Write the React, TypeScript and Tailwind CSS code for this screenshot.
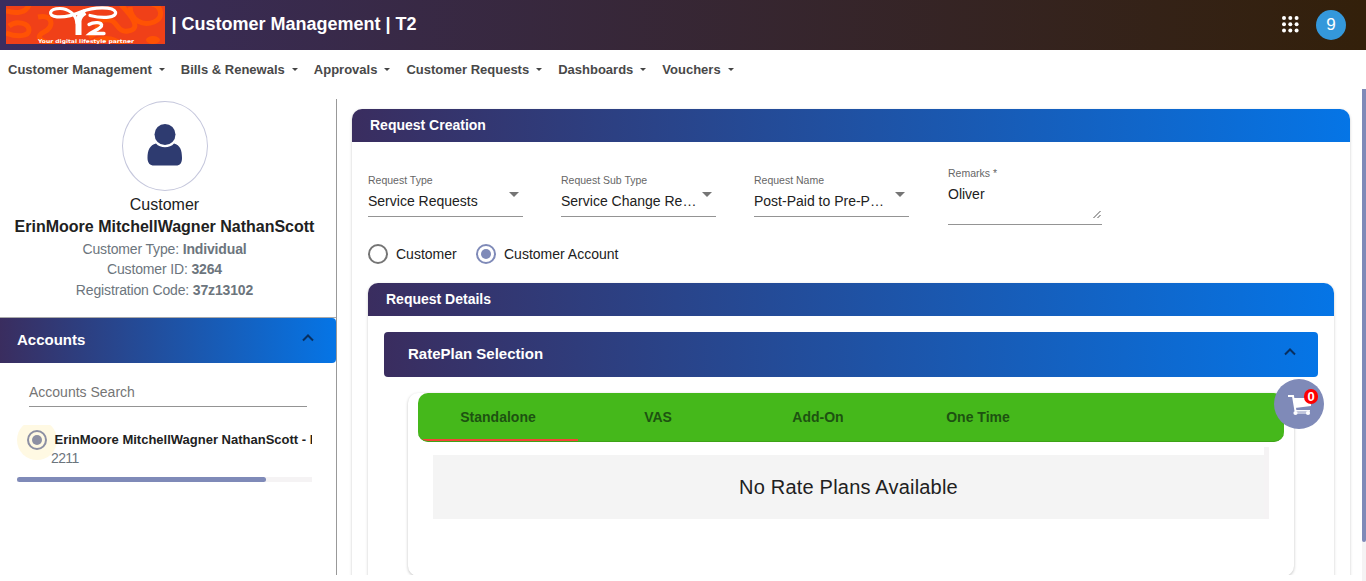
import React from "react";

const navItems = ["Customer Management", "Bills & Renewals", "Approvals", "Customer Requests", "Dashboards", "Vouchers"];
const tabs = ["Standalone", "VAS", "Add-On", "One Time"];

function Logo() {
  return (
    <svg width="159" height="38" viewBox="0 0 159 38" className="block shrink-0">
      <rect width="159" height="38" fill="#f04018" />
      <g fill="none" stroke="#ff5204" strokeWidth="5">
        <path d="M0 5C10 8 20 7 23 -1M3 20C10 14 23 17 23 24C23 31 10 31 0 27" />
        <path d="M32 11C47 8 49 21 38 26C28 31 35 36 48 38" />
        <path d="M83 31C97 26 86 17 97 14C113 11 109 27 122 25C137 23 124 8 115 -1" />
        <path d="M124 1C125 15 137 20 148 16C158 12 156 0 146 -2" />
        <path d="M87 36C104 28 112 36 119 40" />
      </g>
      <ellipse cx="147" cy="34" rx="7" ry="4" fill="#ff5204" />
      <g fill="none" stroke="#fff" strokeLinecap="round" strokeWidth="3.2">
        <path d="M71 17C70 8 62 2.500 54 2.500C43 2.500 41 10 51 10.800C61 11.500 68 9 76 5.500C87 1 107 0 109.500 6C111 11.500 98 13 84 9.500" />
        <path d="M72.500 29V15C73 11 75 8 79 6" strokeWidth="6" strokeLinecap="butt" />
        <path d="M83 18.500C88 15.500 97 16 95.500 20C94 23 87 25 84 27.500H98" strokeWidth="3.300" />
      </g>
      <text x="32" y="37" fill="#fff" fontSize="5" fontWeight="700" fontFamily="DejaVu Sans, sans-serif" textLength="96" lengthAdjust="spacingAndGlyphs">
        Your digital lifestyle partner
      </text>
    </svg>
  );
}

function Chevron() {
  return (
    <svg width="12" height="8" viewBox="0 0 12 8" className="block">
      <path d="M1 6.500L6 1.500L11 6.500" fill="none" stroke="#082f60" strokeWidth="2" />
    </svg>
  );
}

function Radio({ checked, color }: { checked?: boolean; color: string }) {
  return (
    <svg width="20" height="20" viewBox="0 0 20 20" className="block shrink-0">
      <circle cx="10" cy="10" r="9" fill="none" stroke={color} strokeWidth="2" />
      {checked && <circle cx="10" cy="10" r="5" fill={color} />}
    </svg>
  );
}

function SelectField({ label, value }: { label: string; value: string }) {
  return (
    <div className="mt-[7px] mr-[38px] h-[43px] w-[155px] border-b border-[#949494]">
      <div className="h-[13px] text-[10.5px] leading-[13px] text-[#666]">{label}</div>
      <div className="mt-[5px] flex h-[18px] items-start text-sm leading-[18px] text-[#212121]">
        <span className="w-[136px] truncate">{value}</span>
        <svg width="10" height="5" viewBox="0 0 10 5" className="ml-[5px] shrink-0">
          <path d="M0 0H10L5 5Z" fill="#757575" />
        </svg>
      </div>
    </div>
  );
}

function PanelTitle({ children }: { children: React.ReactNode }) {
  return (
    <div className="flex h-[33px] items-center rounded-t-[10px] bg-[linear-gradient(to_right,#3a2d5f,#0575e6)] px-[18px] pb-[2px] text-sm font-bold text-white">
      {children}
    </div>
  );
}

function Sidebar() {
  return (
    <aside className="mt-[10px] h-[476px] w-[337px] shrink-0 border-r border-[#999]">
      <div className="flex h-[219px] flex-col items-center border-b border-[#aaa] pt-[2px]">
        <div className="mr-[7px] flex h-[90px] w-[86px] items-center justify-center rounded-[50%] border border-[#c5c7dc]">
          <svg width="36" height="42" viewBox="0 0 36 42" className="mt-[-3px]">
            <circle cx="18" cy="10.500" r="10.500" fill="#2e3b70" />
            <path d="M9 19.500C13 24.500 23 24.500 27 19.500C33 21 35 26 35 34C35 39 33 41.500 29 41.500H7C3 41.500 .5 39 .5 34C.5 26 3 21 9 19.500Z" fill="#2e3b70" />
          </svg>
        </div>
        <div className="mt-[3px] mr-[7px] text-base leading-[22px] text-[#212121]">Customer</div>
        <div className="mr-[7px] text-base leading-[22px] font-bold whitespace-nowrap text-[#212121]">ErinMoore MitchellWagner NathanScott</div>
        <div className="mt-px mr-[7px] text-center text-sm leading-[20.4px] tracking-[-0.15px] text-[#6c757d]">
          <div>Customer Type: <b>Individual</b></div>
          <div>Customer ID: <b>3264</b></div>
          <div>Registration Code: <b>37z13102</b></div>
        </div>
      </div>
      <div className="flex h-[45px] items-center justify-between rounded-r-[4px] bg-[linear-gradient(to_right,#3a2d5f,#0575e6)] pr-[22px] pl-[17px] text-[15px] font-bold text-white">
        <span>Accounts</span>
        <span className="-mt-[5px]"><Chevron /></span>
      </div>
      <div className="mx-[29px] mt-[20px] h-[24px] border-b border-[#949494] text-sm leading-[18px] text-[#757575]">Accounts Search</div>
      <div className="mt-[18px] ml-[17px] w-[295px] overflow-hidden">
        <div className="flex h-[52px]">
          <div className="-mt-[5px] flex size-10 shrink-0 items-center justify-center rounded-full bg-[#fff9e3]">
            <Radio checked color="#8c8fa3" />
          </div>
          <div className="-ml-[6px] w-[500px] shrink-0">
            <div className="mt-[6px] pl-[3.5px] text-[13px] leading-[18px] font-bold whitespace-nowrap text-[#212121]">ErinMoore MitchellWagner NathanScott - Individual</div>
            <div className="text-sm leading-[19px] tracking-[-0.6px] text-[#6c757d]">2211</div>
          </div>
        </div>
        <div className="h-[5px] bg-[#f5f3f4]"><div className="h-[5px] w-[249px] rounded-full bg-[#7f8ab8]" /></div>
      </div>
    </aside>
  );
}

function RatePlans() {
  return (
    <div className="px-4 pt-4">
      <div className="flex h-[45px] items-center justify-between rounded-[4px] bg-[linear-gradient(to_right,#3a2d5f,#0575e6)] pr-[22px] pl-6 text-[15px] font-bold text-white">
        <span>RatePlan Selection</span>
        <span className="-mt-[5px]"><Chevron /></span>
      </div>
      <div className="mx-6 mt-4 h-[183px] rounded-[10px] px-[10px] shadow-[0_1px_3px_rgba(0,0,0,0.25)]">
        <div className="flex h-[49px] overflow-hidden rounded-[10px] border-b border-[#3da317] bg-[#45b81b]">
          {tabs.map((tab, i) => (
            <div key={tab} className={`flex w-40 items-center justify-center text-sm font-bold text-[#1d5211] ${i === 0 ? "shadow-[inset_0_-2px_0_#f44336]" : ""}`}>
              {tab}
            </div>
          ))}
        </div>
        <div className="mt-[5px] mr-[15px] ml-[15px] flex h-[72px] border-r-[5px] border-[#f5f3f4] pt-2">
          <div className="flex flex-1 items-center justify-center bg-[#f4f4f4] text-xl tracking-[0.2px] text-[#212121]">No Rate Plans Available</div>
        </div>
      </div>
    </div>
  );
}

export default function App() {
  return (
    <div className="relative h-[581px] w-[1366px] overflow-hidden bg-white font-['Liberation_Sans',Arial,sans-serif]">
      <header className="flex h-[50px] items-center bg-[linear-gradient(to_right,#3a2d5f,#33200a)] pl-[6px] text-white">
        <Logo />
        <h1 className="mb-[2px] ml-[6.5px] text-lg font-bold whitespace-nowrap">| Customer Management | T2</h1>
        <div className="mr-5 ml-auto flex items-center gap-[17.5px]">
          <svg width="17" height="17" viewBox="0 0 17 17" fill="#fff" className="mb-[2px]">
            {[2, 8.3, 14.6].map((y) => [2, 8.3, 14.6].map((x) => <circle key={`${x}-${y}`} cx={x} cy={y} r="2" />))}
          </svg>
          <div className="flex size-[30px] items-center justify-center rounded-full bg-[#3498db] pb-px text-[17px]">9</div>
        </div>
      </header>
      <nav className="flex h-[39px] items-center pl-2 text-[13px] font-bold text-[#484848]">
        {navItems.map((item) => (
          <div key={item} className="mr-4 flex items-center whitespace-nowrap">
            {item}
            <svg width="6" height="3" viewBox="0 0 6 3" className="ml-[7px]">
              <path d="M0 0H6L3 3Z" fill="#444" />
            </svg>
          </div>
        ))}
      </nav>
      <div className="flex h-[486px] overflow-hidden">
        <Sidebar />
        <main className="mt-5 ml-[15px] w-[998px] shrink-0">
          <section className="h-[500px] rounded-t-[10px] shadow-[0_1px_3px_rgba(0,0,0,0.22)]">
            <PanelTitle>Request Creation</PanelTitle>
            <div className="flex h-[83px] px-4 pt-[25px]">
              <SelectField label="Request Type" value="Service Requests" />
              <SelectField label="Request Sub Type" value="Service Change Request" />
              <SelectField label="Request Name" value="Post-Paid to Pre-Paid Migration" />
              <div className="ml-px h-[58px] w-[154px] border-b border-[#949494]">
                <div className="text-[10.5px] leading-[13px] text-[#666]">Remarks *</div>
                <div className="mt-[5px] flex h-[34px] items-end justify-between text-sm leading-[18px] text-[#212121]">
                  <span className="self-start">Oliver</span>
                  <svg width="9" height="9" viewBox="0 0 9 9"><path d="M.5 8L7.500 1M4.500 8L7.500 5" stroke="#555" /></svg>
                </div>
              </div>
            </div>
            <div className="mt-[19px] flex h-[20px] items-center px-4 text-sm text-[#212121]">
              <Radio color="#757575" /><span className="ml-2 w-20">Customer</span>
              <Radio checked color="#7f8ab8" /><span className="ml-2">Customer Account</span>
            </div>
            <div className="mx-4 mt-[19px] h-[330px] rounded-t-[10px] shadow-[0_1px_3px_rgba(0,0,0,0.22)]">
              <PanelTitle>Request Details</PanelTitle>
              <RatePlans />
            </div>
          </section>
        </main>
      </div>
      <div className="absolute top-[379px] left-[1274px] size-[50px] rounded-full bg-[#7f8ab8]">
        <svg width="24" height="22" viewBox="0 0 24 22" className="absolute top-[15px] left-[14px]">
          <path d="M0 2H5L7.500 17" fill="none" stroke="#fff" strokeWidth="2" />
          <path d="M5.500 4H23V12L7 14Z" fill="#fff" />
          <path d="M7 16.800H22" stroke="#fff" strokeWidth="1.500" />
          <circle cx="7.500" cy="19" r="2.100" fill="#fff" />
          <circle cx="20" cy="19" r="2.100" fill="#fff" />
          <path d="M8 19H20" stroke="#fff" strokeWidth="1" />
        </svg>
        <span className="absolute top-[10px] left-[30px] flex h-[15px] w-[14px] items-center justify-center rounded-full bg-[#f00] text-[13px] font-bold text-white">0</span>
      </div>
      <div className="absolute top-[89px] right-0 h-[492px] w-1 bg-[#f5f3f4]"><div className="h-[453px] rounded-b-full bg-[#7f8ab8]" /></div>
    </div>
  );
}
